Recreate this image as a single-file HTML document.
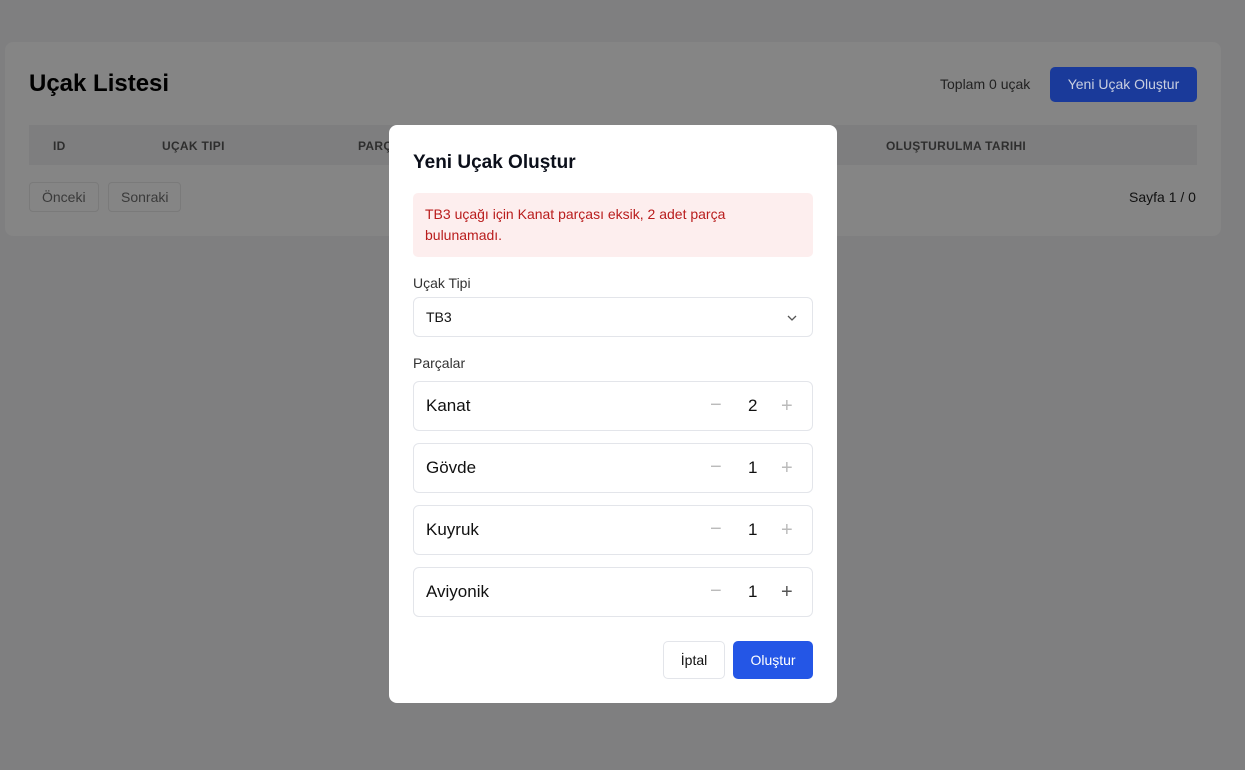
<!DOCTYPE html>
<html><head><meta charset="utf-8"><style>
*{box-sizing:border-box;margin:0;padding:0}
body{width:1245px;height:770px;background:#7f7f80;font-family:"Liberation Sans",sans-serif;position:relative;overflow:hidden}
.card{position:absolute;left:5px;top:42px;width:1216px;height:194px;background:#858585;border-radius:8px}
.title{position:absolute;left:29px;top:70px;font-size:24px;font-weight:bold;color:#000}
.total{position:absolute;left:940px;top:76px;font-size:14px;color:#222}
.newbtn{position:absolute;left:1050px;top:67px;width:147px;height:35px;background:#1a3a9a;border-radius:5px;color:#c9cfe0;font-size:14px;line-height:35px;text-align:center}
.thead{position:absolute;left:29px;top:125px;width:1168px;height:40px;background:#7e7e7f}
.th{position:absolute;top:139px;font-size:12px;font-weight:bold;color:#2e2e2e;letter-spacing:.3px}
.pbtn{position:absolute;top:182px;height:30px;border:1px solid #7a7a7a;border-radius:4px;font-size:14px;color:#3a3a3a;line-height:28px;padding:0 12px;background:#858585}
.page{position:absolute;left:1129px;top:189px;font-size:14px;color:#111}
.modal{position:absolute;left:389px;top:125px;width:448px;height:578px;background:#fff;border-radius:8px}
.mt{position:absolute;left:24px;top:27px;font-size:19px;font-weight:bold;color:#0b0f1a}
.err{position:absolute;left:24px;top:68px;width:400px;height:64px;background:#fdeeee;border-radius:5px;color:#b91c1c;font-size:14px;line-height:21px;padding:11px 12px}
.lbl{position:absolute;left:24px;font-size:14px;color:#333}
.sel{position:absolute;left:24px;top:172px;width:400px;height:40px;border:1px solid #e3e5ea;border-radius:6px;font-size:14px;line-height:38px;padding-left:12px;color:#111}
.row{position:absolute;left:24px;width:400px;height:50px;border:1px solid #e3e5ea;border-radius:6px}
.row .n{position:absolute;left:12px;top:14px;font-size:17px;color:#111}
.row .m{position:absolute;left:296px;top:12px;font-size:20px;color:#bbb}
.row .v{position:absolute;left:334px;top:14px;font-size:17px;color:#111}
.row .p{position:absolute;left:367px;top:13px;font-size:20px;color:#bbb}
.b1{position:absolute;left:274px;top:516px;width:62px;height:38px;border:1px solid #e3e5ea;border-radius:5px;font-size:14px;text-align:center;line-height:36px;color:#111}
.b2{position:absolute;left:344px;top:516px;width:80px;height:38px;background:#2456e6;border-radius:5px;font-size:14px;text-align:center;line-height:38px;color:#fff}
</style></head><body>
<div class="card"></div>
<div class="title">Uçak Listesi</div>
<div class="total">Toplam 0 uçak</div>
<div class="newbtn">Yeni Uçak Oluştur</div>
<div class="thead"></div>
<div class="th" style="left:53px">ID</div>
<div class="th" style="left:162px">UÇAK TIPI</div>
<div class="th" style="left:358px">PARÇALAR</div>
<div class="th" style="left:886px">OLUŞTURULMA TARIHI</div>
<div class="pbtn" style="left:29px">Önceki</div>
<div class="pbtn" style="left:108px">Sonraki</div>
<div class="page">Sayfa 1 / 0</div>
<div class="modal">
<div class="mt">Yeni Uçak Oluştur</div>
<div class="err">TB3 uçağı için Kanat parçası eksik, 2 adet parça bulunamadı.</div>
<div class="lbl" style="top:150px">Uçak Tipi</div>
<div class="sel">TB3<svg style="position:absolute;right:14px;top:14px" width="12" height="12" viewBox="0 0 12 12"><path d="M2 4l4 4 4-4" fill="none" stroke="#555" stroke-width="1.3"/></svg></div>
<div class="lbl" style="top:230px">Parçalar</div>
<div class="row" style="top:256px"><span class="n">Kanat</span><span class="m">−</span><span class="v">2</span><span class="p">+</span></div>
<div class="row" style="top:318px"><span class="n">Gövde</span><span class="m">−</span><span class="v">1</span><span class="p">+</span></div>
<div class="row" style="top:380px"><span class="n">Kuyruk</span><span class="m">−</span><span class="v">1</span><span class="p">+</span></div>
<div class="row" style="top:442px"><span class="n">Aviyonik</span><span class="m">−</span><span class="v">1</span><span class="p" style="color:#555">+</span></div>
<div class="b1">İptal</div>
<div class="b2">Oluştur</div>
</div>
</body></html>
